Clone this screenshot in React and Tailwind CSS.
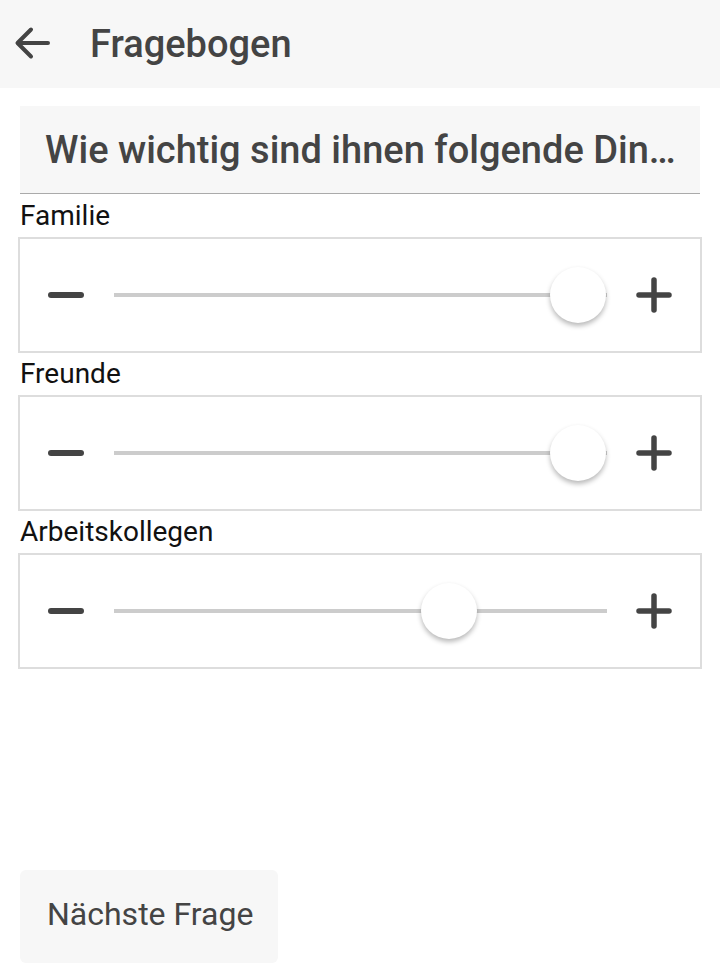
import React from "react";

const items = [
  { label: "Familie", value: 1 },
  { label: "Freunde", value: 1 },
  { label: "Arbeitskollegen", value: 0.705 },
];

function Minus() {
  return (
    <svg width="36" height="36" viewBox="0 0 36 36" className="shrink-0">
      <line x1="3" y1="18" x2="33" y2="18" stroke="#444" strokeWidth="6" strokeLinecap="round" />
    </svg>
  );
}

function Plus() {
  return (
    <svg width="36" height="36" viewBox="0 0 36 36" className="shrink-0">
      <line x1="3" y1="18" x2="33" y2="18" stroke="#444" strokeWidth="5.5" strokeLinecap="round" />
      <line x1="18" y1="3" x2="18" y2="33" stroke="#444" strokeWidth="5.5" strokeLinecap="round" />
    </svg>
  );
}

function Slider({ value }) {
  return (
    <div className="relative flex-1 h-[56px] flex items-center ml-[30px] mr-[29px]">
      <div className="h-[4px] w-full bg-[#cccccc]" />
      <div
        className="absolute top-0 h-[56px] w-[56px] rounded-full bg-white shadow-[0_3px_5px_rgba(0,0,0,0.28)]"
        style={{ left: `calc(${value} * (100% - 57px))` }}
      />
    </div>
  );
}

export default function App() {
  return (
    <div className="w-[720px] h-[975px] bg-white flex flex-col font-['Roboto',sans-serif]">
      <div className="h-[88px] bg-[#f7f7f7] flex items-center shrink-0">
        <svg width="36" height="36" viewBox="0 0 36 36" className="ml-[14px]">
          <path d="M34 17H4M17 3.5L3.5 17 17 30.5" fill="none" stroke="#444" strokeWidth="4" strokeLinecap="round" strokeLinejoin="round" />
        </svg>
        <div className="ml-[40px] text-[38px] font-medium text-[#444] leading-none">Fragebogen</div>
      </div>

      <div className="mx-[20px] mt-[18px] h-[88px] bg-[#f7f7f7] border-b border-[#aaaaaa] flex items-center px-[25px]">
        <div className="text-[38px] font-medium text-[#444] whitespace-nowrap leading-none py-1">
          Wie wichtig sind ihnen folgende Din…
        </div>
      </div>

      <div className="flex flex-col pt-[1px]">
        {items.map((it) => (
          <div key={it.label} className="flex flex-col">
            <div className="h-[42px] px-[20px] flex items-center text-[28px] text-[#111] leading-none">
              {it.label}
            </div>
            <div className="mx-[18px] h-[116px] border-2 border-[#dddddd] flex items-center px-[28px]">
              <Minus />
              <Slider value={it.value} />
              <Plus />
            </div>
          </div>
        ))}
      </div>

      <div className="mt-auto mb-[12px] ml-[20px]">
        <button className="w-[258px] h-[93px] rounded-[6px] bg-[#f7f7f7] text-[32px] text-[#444] text-left pl-[27px] pb-[6px] leading-none">
          Nächste Frage
        </button>
      </div>
    </div>
  );
}
